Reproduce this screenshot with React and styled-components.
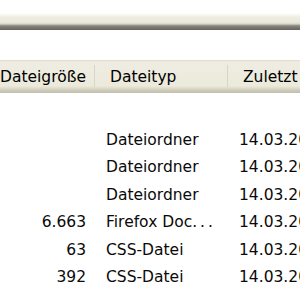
import styled, { createGlobalStyle } from "styled-components";

const GlobalStyle = createGlobalStyle`
  html, body {
    margin: 0;
    padding: 0;
    background: #ffffff;
  }
  body {
    width: 300px;
    height: 300px;
    overflow: hidden;
    font-family: "DejaVu Sans", Tahoma, sans-serif;
    font-size: 15.5px;
    color: #0a0a0a;
  }
`

const Window = styled.div`
  display: flex;
  flex-direction: column;
  width: 300px;
  height: 300px;
  overflow: hidden;
`

const Toolbar = styled.div`
  margin-top: 13px;
  height: 17px;
  background: linear-gradient(
    to bottom,
    #ffffff 0px,
    #f7f6f0 2px,
    #efede2 4px,
    #ebe9db 9px,
    #d9d6c8 11px,
    #a9a699 12px,
    #85837a 13px,
    #66645e 17px
  );
`

const Header = styled.div`
  margin-top: 30px;
  height: 33px;
  display: grid;
  grid-template-columns: 95px 133px 1fr;
  background: linear-gradient(
    to bottom,
    #dedbcd 0px,
    #efede2 2px,
    #ebeadb 26px,
    #e0ddcb 28px,
    #d0ccbc 30px,
    #c3bfae 33px
  );
`

const HeaderCell = styled.div`
  position: relative;
  display: flex;
  align-items: center;
  justify-content: ${props => (props.right ? "flex-end" : "flex-start")};
  padding: ${props => (props.right ? "0 9px 0 0" : "0 0 0 15px")};
  color: #000;
  white-space: nowrap;
  overflow: hidden;
  ${props => props.sep && `
    &::after {
      content: "";
      position: absolute;
      right: -3px;
      top: 5px;
      bottom: 6px;
      width: 4px;
      background: linear-gradient(to right, #ebeadb 0, #c4c0b0 1px, #d2cfc0 2px, #ffffff 3px);
    }
  `}
`

const Rows = styled.div`
  margin-top: 33px;
  display: flex;
  flex-direction: column;
`

const Row = styled.div`
  display: grid;
  grid-template-columns: 95px 133px 1fr;
  height: 27.5px;
  align-items: center;
`

const Cell = styled.div`
  white-space: nowrap;
  overflow: hidden;
  text-align: ${props => (props.right ? "right" : "left")};
  padding: ${props => (props.right ? "0 9px 0 0" : "0 0 0 11px")};
`

const Dots = styled.span`
  letter-spacing: 3px;
`

const files = [
  { size: "", type: "Dateiordner", date: "14.03.2007 10:12" },
  { size: "", type: "Dateiordner", date: "14.03.2007 10:12" },
  { size: "", type: "Dateiordner", date: "14.03.2007 10:12" },
  { size: "6.663", type: "Firefox Doc", more: true, date: "14.03.2007 10:12" },
  { size: "63", type: "CSS-Datei", date: "14.03.2007 10:12" },
  { size: "392", type: "CSS-Datei", date: "14.03.2007 10:12" },
];

const App = () => {
  return (
    <Window>
      <GlobalStyle />
      <Toolbar />
      <Header>
        <HeaderCell right sep>Dateigröße</HeaderCell>
        <HeaderCell sep>Dateityp</HeaderCell>
        <HeaderCell>Zuletzt geändert</HeaderCell>
      </Header>
      <Rows>
        {files.map((file, index) => (
          <Row key={index}>
            <Cell right>{file.size}</Cell>
            <Cell>{file.type}{file.more && <Dots>...</Dots>}</Cell>
            <Cell>{file.date}</Cell>
          </Row>
        ))}
      </Rows>
    </Window>
  );
}

export default App;
